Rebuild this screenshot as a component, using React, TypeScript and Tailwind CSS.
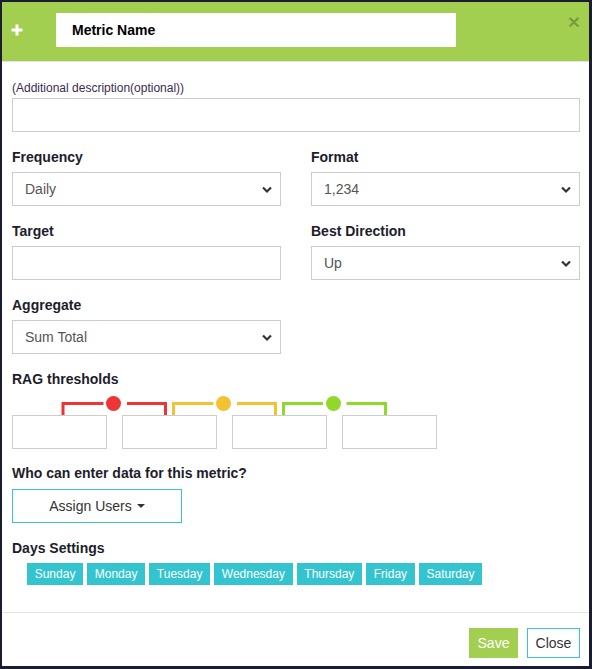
import React from 'react';

const font = { fontFamily: '"Liberation Sans", Arial, sans-serif' };

const days = ['Sunday', 'Monday', 'Tuesday', 'Wednesday', 'Thursday', 'Friday', 'Saturday'];

const Chevron = () => (
  <svg width="12" height="8" viewBox="0 0 12 8" className="pointer-events-none absolute right-[8px] top-[14px]">
    <path d="M2 1.5 L6 5.5 L10 1.5" fill="none" stroke="#333" strokeWidth="2.2" />
  </svg>
);

const Label = ({ children }: { children: React.ReactNode }) => (
  <div className="mb-[5px] text-sm font-bold leading-5 text-[#1d1d2b]">{children}</div>
);

const SelectBox = ({ value }: { value: string }) => (
  <div className="relative">
    <select
      defaultValue={value}
      className="h-[34px] w-full appearance-none border border-[#ccc] bg-white pl-3 text-sm text-[#555] outline-none"
    >
      <option>{value}</option>
    </select>
    <Chevron />
  </div>
);

const TextBox = () => (
  <input className="block h-[34px] w-full border border-[#ccc] bg-white px-3 text-sm outline-none" />
);

const RagLines = () => (
  <svg width="440" height="26" viewBox="0 0 440 26" className="block">
    <g fill="none" strokeWidth="3">
      <path d="M51 26 V14.5 H91.5 M115 14.5 H153.5 V26" stroke="#ee3535" />
      <path d="M161.5 26 V14.5 H201.5 M225 14.5 H263.5 V26" stroke="#f3c231" />
      <path d="M271.5 26 V14.5 H311 M334.5 14.5 H373.5 V26" stroke="#90d82a" />
    </g>
    <circle cx="101.5" cy="14.5" r="7.5" fill="#ee3535" />
    <circle cx="211.5" cy="14.5" r="7.5" fill="#f3c231" />
    <circle cx="321.5" cy="14.5" r="7.5" fill="#90d82a" />
  </svg>
);

export default function App() {
  return (
    <div
      style={font}
      className="flex h-[669px] w-[592px] flex-col border-b-[3px] border-l-2 border-r-[3px] border-t-2 border-[#1c1c30] bg-white"
    >
      {/* header */}
      <div className="flex h-[60px] shrink-0 items-start border-b border-[#e5e5e5] bg-[#a2cf50]">
        <svg width="12" height="12" viewBox="0 0 12 12" className="ml-[9px] mt-[22px]">
          <path d="M6 0.5 V11.5 M0.5 6 H11.5" stroke="#fff" strokeWidth="3" />
        </svg>
        <div className="ml-[33px] mt-[11px] flex h-[34px] w-[400px] items-center bg-white pl-4 text-sm font-bold text-black">
          Metric Name
        </div>
        <button className="ml-auto mr-[9px] mt-[9px] text-[21px] font-bold leading-none text-black/25">×</button>
      </div>

      {/* body */}
      <div className="flex-1 pl-[10px] pr-[9px] pt-[18px]">
        <div className="mb-[2px] text-xs leading-4 text-[#3a2a52]">(Additional description(optional))</div>
        <TextBox />

        <div className="mt-[15px] grid grid-cols-2 gap-x-[30px] gap-y-[15px]">
          <div>
            <Label>Frequency</Label>
            <SelectBox value="Daily" />
          </div>
          <div>
            <Label>Format</Label>
            <SelectBox value="1,234" />
          </div>
          <div>
            <Label>Target</Label>
            <TextBox />
          </div>
          <div>
            <Label>Best Direction</Label>
            <SelectBox value="Up" />
          </div>
          <div>
            <Label>Aggregate</Label>
            <SelectBox value="Sum Total" />
          </div>
        </div>

        <div className="mt-[15px] text-sm font-bold leading-5 text-[#1d1d2b]">RAG thresholds</div>
        <RagLines />
        <div className="flex gap-[15px]">
          {[0, 1, 2, 3].map(i => (
            <input key={i} className="h-[34px] w-[95px] border border-[#ccc] bg-white outline-none" />
          ))}
        </div>

        <div className="mt-[14px] mb-[6px] text-sm font-bold leading-5 text-[#1d1d2b]">Who can enter data for this metric?</div>
        <button className="flex h-[34px] w-[170px] items-center justify-center gap-[5px] border border-[#3cc4cc] bg-white text-sm text-[#333]">
          Assign Users
          <svg width="8" height="4" viewBox="0 0 8 4"><path d="M0 0 H8 L4 4 Z" fill="#333" /></svg>
        </button>

        <div className="mt-[15px] mb-[5px] text-sm font-bold leading-5 text-[#1d1d2b]">Days Settings</div>
        <div className="ml-[15px] flex gap-[4px]">
          {days.map(d => (
            <button key={d} className="h-[22px] bg-[#33c4d0] px-[7.7px] text-xs leading-[22px] text-white">
              {d}
            </button>
          ))}
        </div>
      </div>

      {/* footer */}
      <div className="flex h-[54px] shrink-0 items-start justify-end gap-[9px] border-t border-[#e5e5e5] pr-[9px] pt-[15px]">
        <button className="h-[30px] w-[49px] bg-[#a2cf50] text-sm text-white">Save</button>
        <button className="h-[30px] w-[53px] border border-[#3cc4cc] bg-white text-sm text-[#333]">Close</button>
      </div>
    </div>
  );
}
